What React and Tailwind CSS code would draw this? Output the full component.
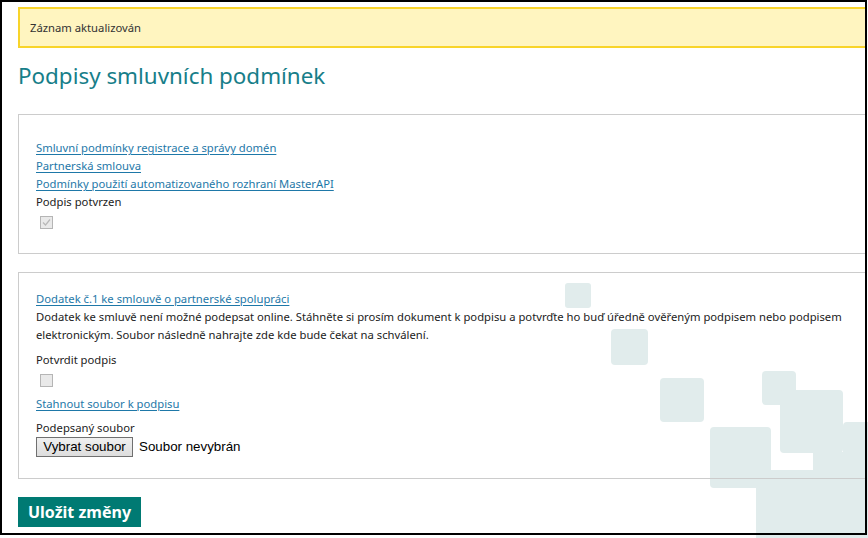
import React from "react";

function Squares() {
  const c = "#e1ecec";
  return (
    <svg className="absolute left-0 top-0 pointer-events-none" width="868" height="538" viewBox="0 0 868 538">
      <rect x="565" y="283" width="26" height="25" rx="3" fill={c} />
      <rect x="611" y="329" width="37" height="36" rx="4" fill={c} />
      <rect x="660" y="378" width="44" height="44" rx="4" fill={c} />
      <rect x="762" y="371" width="34" height="34" rx="4" fill={c} />
      <rect x="780" y="390" width="63" height="63" rx="4" fill={c} />
      <rect x="843" y="422" width="40" height="130" rx="4" fill={c} />
      <rect x="813" y="452" width="70" height="100" rx="0" fill={c} />
      <rect x="710" y="427" width="61" height="61" rx="4" fill={c} />
      <rect x="756" y="470" width="120" height="80" rx="0" fill={c} />
    </svg>
  );
}

function Checkbox({ checked }) {
  return (
    <div className="w-[13px] h-[13px] border border-[#b5b5b5] bg-[#e9e9e9] flex items-center justify-center">
      {checked && (
        <svg width="11" height="11" viewBox="0 0 11 11">
          <path d="M2 5.5 L4.5 8 L9 2.5" stroke="#b8b8b8" strokeWidth="1.2" fill="none" />
        </svg>
      )}
    </div>
  );
}

export default function App() {
  const link = "text-[#1e78a8] underline underline-offset-[2px] decoration-[1px] w-fit";
  return (
    <div className="relative w-[868px] h-[538px] bg-white overflow-hidden font-['Noto_Sans',sans-serif] text-[11.25px] leading-[18px] text-[#222]">
      <Squares />
      <div className="relative w-[867px] h-[535px] border-2 border-black overflow-hidden">
        <div className="flex flex-col pl-[16px] pt-[5px]">
          <div className="w-[870px] h-[41px] border-2 border-[#f8d42a] bg-[#fff5c0] flex items-center pl-[10px] text-[#333]">
            Záznam aktualizován
          </div>
          <h1 className="mt-[13px] text-[22.4px] leading-[30px] text-[#177e89] font-normal">
            Podpisy smluvních podmínek
          </h1>
          <div className="mt-[23px] w-[870px] border border-[#cccccc] pl-[17px] pt-[24px] pb-[24px] flex flex-col">
            <a className={link}>Smluvní podmínky registrace a správy domén</a>
            <a className={link}>Partnerská smlouva</a>
            <a className={link}>Podmínky použití automatizovaného rozhraní MasterAPI</a>
            <div>Podpis potvrzen</div>
            <div className="mt-[5px] ml-[4px]">
              <Checkbox checked />
            </div>
          </div>
          <div className="mt-[18px] w-[870px] border border-[#cccccc] pl-[17px] pt-[17px] pb-[21px] flex flex-col">
            <a className={link}>Dodatek č.1 ke smlouvě o partnerské spolupráci</a>
            <p className="w-[830px]">
              Dodatek ke smluvě není možné podepsat online. Stáhněte si prosím dokument k podpisu a potvrďte ho buď úředně ověřeným podpisem nebo podpisem elektronickým. Soubor následně nahrajte zde kde bude čekat na schválení.
            </p>
            <div className="mt-[7px]">Potvrdit podpis</div>
            <div className="mt-[5px] ml-[4px]">
              <Checkbox />
            </div>
            <a className={link + " mt-[8px]"}>Stahnout soubor k podpisu</a>
            <div className="mt-[6px]">Podepsaný soubor</div>
            <div className="flex items-center gap-[6px] font-['Liberation_Sans',sans-serif] text-[13.33px] text-black">
              <button className="h-[20px] w-[97px] border border-[#707070] bg-gradient-to-b from-[#f0f0f0] to-[#dddddd] text-[13.33px] leading-[18px]">
                Vybrat soubor
              </button>
              <span>Soubor nevybrán</span>
            </div>
          </div>
          <button className="mt-[18px] w-[123px] h-[30px] bg-[#007a73] text-white font-bold text-[16px] leading-[30px]">
            Uložit změny
          </button>
        </div>
      </div>
    </div>
  );
}
